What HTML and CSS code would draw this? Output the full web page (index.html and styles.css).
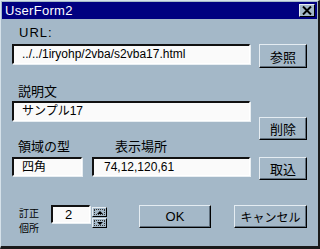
FILE: index.html
```html
<!DOCTYPE html>
<html>
<head>
<meta charset="utf-8">
<link rel="stylesheet" href="styles.css">
</head>
<body>
<div class="window">
  <div class="titlebar">
    <span class="title">UserForm2</span>
    <span class="close"><svg width="10" height="9" viewBox="0 0 10 9"><path d="M1 0.5 L9 8.5 M9 0.5 L1 8.5" stroke="#000" stroke-width="2"/></svg></span>
  </div>
  <div class="body">
    <div class="main">
      <div class="fields">
        <div class="label url-label">URL:</div>
        <div class="field wide">../../1iryohp/2vba/s2vba17.html</div>
        <div class="label desc-label">説明文</div>
        <div class="field wide">サンプル17</div>
        <div class="pair-labels"><span class="lab-a">領域の型</span><span class="lab-b">表示場所</span></div>
        <div class="pair-fields"><div class="field short">四角</div><div class="field loc">74,12,120,61</div></div>
      </div>
      <div class="side">
        <div class="btn side-btn b-ref">参照</div>
        <div class="btn side-btn b-del">削除</div>
        <div class="btn side-btn b-get">取込</div>
      </div>
    </div>
    <div class="footer">
      <div class="count-label"><div>訂正</div><div>個所</div></div>
      <div class="field spin-field">2</div>
      <div class="spin">
        <div class="spin-btn"><span class="arrow up"></span></div>
        <div class="spin-btn"><span class="arrow down"></span></div>
      </div>
      <div class="btn foot-btn ok">OK</div>
      <div class="btn foot-btn cancel">キャンセル</div>
    </div>
  </div>
</div>
</body>
</html>
```
FILE: styles.css
```css
html, body {
  margin: 0;
  padding: 0;
  background: #a4b8c8;
}
.window {
  width: 320px;
  height: 249px;
  box-sizing: border-box;
  background: #a4b8c8;
  border-top: 1px solid #d6e2ea;
  border-left: 1px solid #d6e2ea;
  border-right: 2px solid #1a1a1a;
  border-bottom: 3px solid #1a1a1a;
  padding: 1px 1px 0 1px;
  font-family: "Liberation Sans", "Noto Sans CJK JP", sans-serif;
  font-size: 13px;
  color: #000;
}
.titlebar {
  height: 17px;
  background: #000080;
  display: flex;
  align-items: center;
  justify-content: space-between;
  padding: 0 2px 0 3px;
}
.title {
  color: #fff;
  font-size: 13px;
  line-height: 17px;
  letter-spacing: 0.3px;
}
.close {
  width: 14px;
  height: 11px;
  background: #a4b8c8;
  border-top: 1px solid #e8eef3;
  border-left: 1px solid #e8eef3;
  border-right: 1px solid #000;
  border-bottom: 1px solid #000;
  display: flex;
  align-items: center;
  justify-content: center;
}
.body {
  padding-left: 10px;
}
.main {
  display: flex;
  gap: 9px;
}
.fields {
  width: 238px;
  display: flex;
  flex-direction: column;
}
.label {
  height: 16px;
  line-height: 16px;
  padding-left: 7px;
  font-family: "Liberation Sans", "Noto Sans CJK JP", sans-serif;
}
.url-label {
  margin-top: 6px;
  letter-spacing: 1px;
}
.desc-label {
  margin-top: 20px;
  padding-left: 6px;
}
.field {
  box-sizing: border-box;
  background: #fafafa;
  border-top: 2px solid #111;
  border-left: 2px solid #111;
  border-right: 1px solid #fff;
  border-bottom: 1px solid #fff;
  box-shadow: 1px 1px 0 #e8eef2;
  height: 20px;
  line-height: 17px;
  padding-left: 8px;
  font-size: 12px;
  white-space: nowrap;
  font-family: "Liberation Sans", "Noto Sans CJK JP", sans-serif;
}
.wide {
  margin-top: 3px;
}
.fields .field.wide + .label + .field.wide {
  margin-top: 1px;
}
.pair-labels {
  display: flex;
  margin-top: 18px;
  height: 16px;
  line-height: 16px;
}
.lab-a {
  padding-left: 6px;
  width: 97px;
}
.pair-fields {
  display: flex;
  margin-top: 2px;
  gap: 10px;
}
.short {
  width: 70px;
  height: 19px;
}
.loc {
  width: 158px;
  height: 19px;
  padding-left: 10px;
}
.side {
  display: flex;
  flex-direction: column;
}
.btn {
  box-sizing: border-box;
  background: #a4b8c8;
  border-top: 1px solid #e4ecf2;
  border-left: 1px solid #e4ecf2;
  border-right: 1px solid #000;
  border-bottom: 1px solid #000;
  box-shadow: inset -1px -1px 0 #5e6e7c;
  display: flex;
  align-items: center;
  justify-content: center;
  font-family: "Noto Sans CJK JP", "Liberation Sans", sans-serif;
  font-size: 13px;
}
.side-btn {
  width: 48px;
  height: 24px;
}
.b-ref {
  margin-top: 25px;
}
.b-del {
  margin-top: 49px;
  height: 23px;
}
.b-get {
  margin-top: 17px;
  height: 23px;
}
.footer {
  display: flex;
  align-items: flex-start;
  margin-top: 25px;
}
.count-label {
  font-family: "Noto Sans CJK JP", sans-serif;
  font-size: 10px;
  line-height: 15px;
  margin-left: 7px;
  margin-top: 0;
  width: 26px;
}
.count-label div {
  height: 15px;
}
.spin-field {
  width: 39px;
  height: 18px;
  line-height: 15px;
  margin-left: 6px;
  padding-left: 12px;
  font-size: 13px;
}
.spin {
  display: flex;
  flex-direction: column;
  gap: 1px;
  margin-left: 2px;
  margin-top: 2px;
}
.spin-btn {
  box-sizing: border-box;
  width: 15px;
  height: 10px;
  background: #a4b8c8;
  border-top: 1px solid #e4ecf2;
  border-left: 1px solid #e4ecf2;
  border-right: 1px solid #000;
  border-bottom: 1px solid #000;
  display: flex;
  align-items: center;
  justify-content: center;
  outline: 1px dotted #333;
  outline-offset: -3px;
}
.arrow {
  width: 0;
  height: 0;
  border-left: 3px solid transparent;
  border-right: 3px solid transparent;
}
.arrow.up {
  border-bottom: 3px solid #000;
}
.arrow.down {
  border-top: 3px solid #000;
}
.foot-btn {
  height: 23px;
  margin-top: 0;
}
.ok {
  width: 72px;
  margin-left: 32px;
  font-family: "Liberation Sans", sans-serif;
  font-size: 13px;
}
.cancel {
  width: 73px;
  margin-left: 23px;
  font-size: 12px;
}
```
